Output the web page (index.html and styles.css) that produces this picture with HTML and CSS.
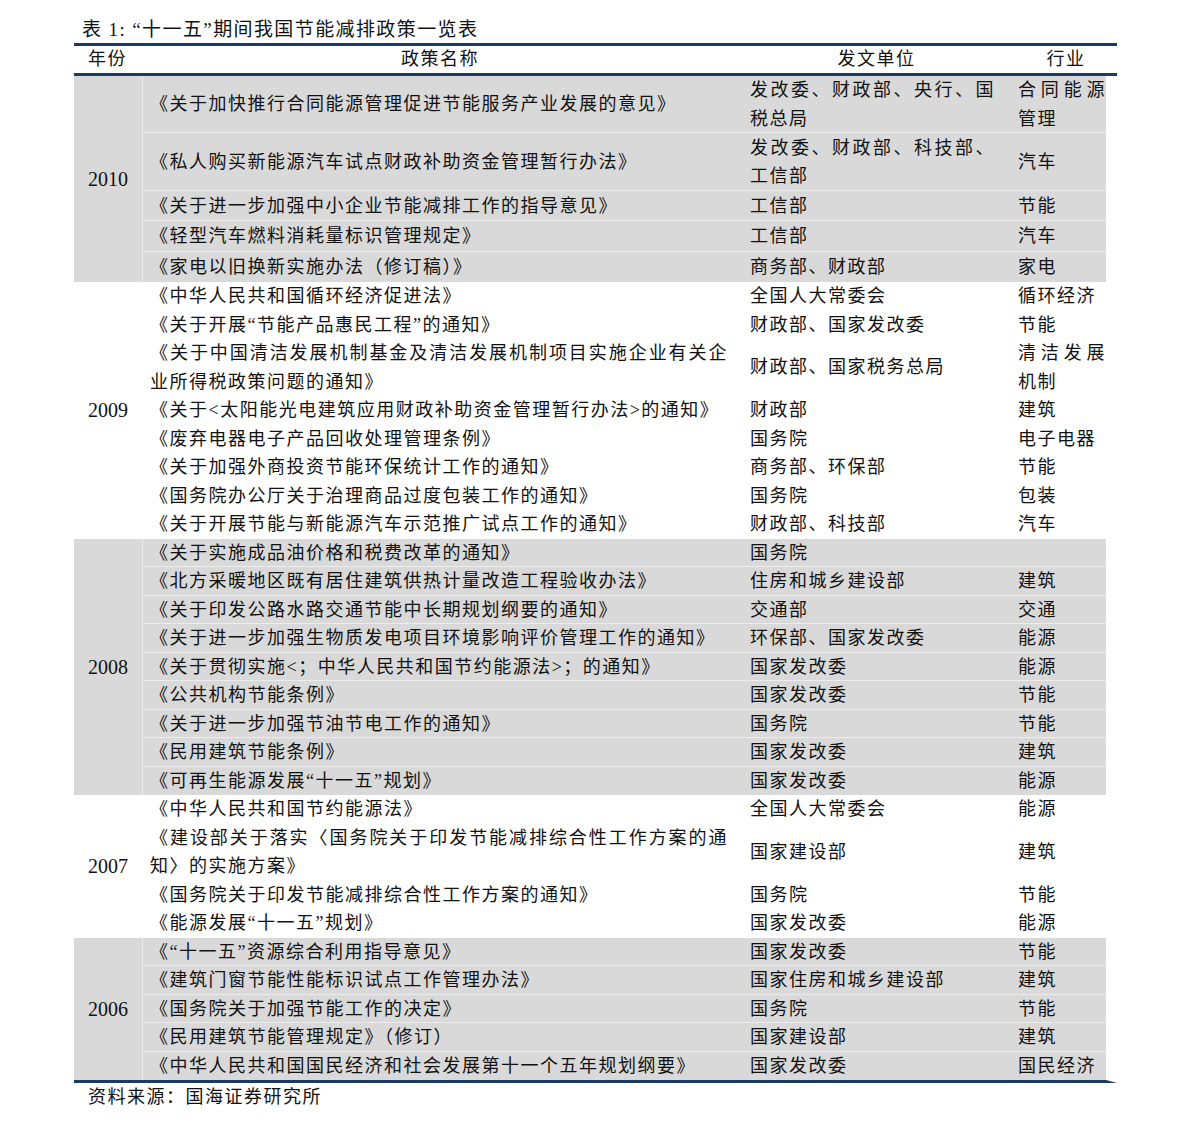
FILE: index.html
```html
<!DOCTYPE html>
<html lang="zh-CN">
<head>
<meta charset="utf-8">
<title>“十一五”期间我国节能减排政策一览表</title>
<link rel="stylesheet" href="styles.css">
</head>
<body>
<div class="page">
  <div class="title">表 1:&nbsp;“十一五”期间我国节能减排政策一览表</div>
  <table class="policy">
    <colgroup>
      <col class="c-year"><col class="c-name"><col class="c-org"><col class="c-ind">
    </colgroup>
    <thead>
      <tr><th class="year">年份</th><th class="name">政策名称</th><th class="org">发文单位</th><th class="ind">行业</th></tr>
    </thead>
    <tbody class="grey">
      <tr class="h57"><td class="year" rowspan="5">2010</td><td class="name">《关于加快推行合同能源管理促进节能服务产业发展的意见》</td><td class="org">发改委、财政部、央行、国税总局</td><td class="ind">合同能源管理</td></tr>
      <tr class="h58"><td class="name">《私人购买新能源汽车试点财政补助资金管理暂行办法》</td><td class="org">发改委、财政部、科技部、工信部</td><td class="ind">汽车</td></tr>
      <tr class="h30"><td class="name">《关于进一步加强中小企业节能减排工作的指导意见》</td><td class="org">工信部</td><td class="ind">节能</td></tr>
      <tr class="h31"><td class="name">《轻型汽车燃料消耗量标识管理规定》</td><td class="org">工信部</td><td class="ind">汽车</td></tr>
      <tr class="h30"><td class="name">《家电以旧换新实施办法（修订稿）》</td><td class="org">商务部、财政部</td><td class="ind">家电</td></tr>
    </tbody>
    <tbody class="white">
      <tr><td class="year" rowspan="8">2009</td><td class="name">《中华人民共和国循环经济促进法》</td><td class="org">全国人大常委会</td><td class="ind">循环经济</td></tr>
      <tr><td class="name">《关于开展“节能产品惠民工程”的通知》</td><td class="org">财政部、国家发改委</td><td class="ind">节能</td></tr>
      <tr><td class="name">《关于中国清洁发展机制基金及清洁发展机制项目实施企业有关企业所得税政策问题的通知》</td><td class="org">财政部、国家税务总局</td><td class="ind">清洁发展机制</td></tr>
      <tr><td class="name">《关于&lt;太阳能光电建筑应用财政补助资金管理暂行办法&gt;的通知》</td><td class="org">财政部</td><td class="ind">建筑</td></tr>
      <tr><td class="name">《废弃电器电子产品回收处理管理条例》</td><td class="org">国务院</td><td class="ind">电子电器</td></tr>
      <tr><td class="name">《关于加强外商投资节能环保统计工作的通知》</td><td class="org">商务部、环保部</td><td class="ind">节能</td></tr>
      <tr><td class="name">《国务院办公厅关于治理商品过度包装工作的通知》</td><td class="org">国务院</td><td class="ind">包装</td></tr>
      <tr><td class="name">《关于开展节能与新能源汽车示范推广试点工作的通知》</td><td class="org">财政部、科技部</td><td class="ind">汽车</td></tr>
    </tbody>
    <tbody class="grey">
      <tr><td class="year" rowspan="9">2008</td><td class="name">《关于实施成品油价格和税费改革的通知》</td><td class="org">国务院</td><td class="ind"></td></tr>
      <tr><td class="name">《北方采暖地区既有居住建筑供热计量改造工程验收办法》</td><td class="org">住房和城乡建设部</td><td class="ind">建筑</td></tr>
      <tr><td class="name">《关于印发公路水路交通节能中长期规划纲要的通知》</td><td class="org">交通部</td><td class="ind">交通</td></tr>
      <tr><td class="name">《关于进一步加强生物质发电项目环境影响评价管理工作的通知》</td><td class="org">环保部、国家发改委</td><td class="ind">能源</td></tr>
      <tr><td class="name">《关于贯彻实施&lt;；中华人民共和国节约能源法&gt;；的通知》</td><td class="org">国家发改委</td><td class="ind">能源</td></tr>
      <tr><td class="name">《公共机构节能条例》</td><td class="org">国家发改委</td><td class="ind">节能</td></tr>
      <tr><td class="name">《关于进一步加强节油节电工作的通知》</td><td class="org">国务院</td><td class="ind">节能</td></tr>
      <tr><td class="name">《民用建筑节能条例》</td><td class="org">国家发改委</td><td class="ind">建筑</td></tr>
      <tr><td class="name">《可再生能源发展“十一五”规划》</td><td class="org">国家发改委</td><td class="ind">能源</td></tr>
    </tbody>
    <tbody class="white">
      <tr><td class="year" rowspan="4">2007</td><td class="name">《中华人民共和国节约能源法》</td><td class="org">全国人大常委会</td><td class="ind">能源</td></tr>
      <tr><td class="name">《建设部关于落实〈国务院关于印发节能减排综合性工作方案的通知〉的实施方案》</td><td class="org">国家建设部</td><td class="ind">建筑</td></tr>
      <tr><td class="name">《国务院关于印发节能减排综合性工作方案的通知》</td><td class="org">国务院</td><td class="ind">节能</td></tr>
      <tr><td class="name">《能源发展“十一五”规划》</td><td class="org">国家发改委</td><td class="ind">能源</td></tr>
    </tbody>
    <tbody class="grey last">
      <tr><td class="year" rowspan="5">2006</td><td class="name">《“十一五”资源综合利用指导意见》</td><td class="org">国家发改委</td><td class="ind">节能</td></tr>
      <tr><td class="name">《建筑门窗节能性能标识试点工作管理办法》</td><td class="org">国家住房和城乡建设部</td><td class="ind">建筑</td></tr>
      <tr><td class="name">《国务院关于加强节能工作的决定》</td><td class="org">国务院</td><td class="ind">节能</td></tr>
      <tr><td class="name">《民用建筑节能管理规定》（修订）</td><td class="org">国家建设部</td><td class="ind">建筑</td></tr>
      <tr><td class="name">《中华人民共和国国民经济和社会发展第十一个五年规划纲要》</td><td class="org">国家发改委</td><td class="ind">国民经济</td></tr>
    </tbody>
  </table>
  <div class="source">资料来源：国海证券研究所</div>
</div>
</body>
</html>
```

FILE: styles.css
```css
html, body {
  margin: 0;
  padding: 0;
  background: #ffffff;
}

body {
  font-family: "Liberation Serif", "Noto Sans CJK SC", serif;
  color: #111;
  font-size: 18px;
}

.page {
  padding: 16px 0 0 74px;
}

.title {
  line-height: 27px;
  padding-left: 8px;
  letter-spacing: 1.4px;
  font-size: 19px;
}

.policy {
  border-collapse: separate;
  border-spacing: 0;
  width: 1043px;
  table-layout: fixed;
}

.c-year { width: 68px; }
.c-name { width: 596px; }
.c-org { width: 277px; }
.c-ind { width: 102px; }

.policy th {
  font-weight: normal;
  height: 27px;
  line-height: 27px;
  padding: 0;
  border-top: 3px solid #1d3a63;
  border-bottom: 3px solid #1d3a63;
  letter-spacing: 1.5px;
  text-align: center;
}

.policy th.year {
  text-align: left;
  padding-left: 14px;
}

.policy td {
  padding: 0;
  line-height: 28.5px;
  height: 28.5px;
  vertical-align: middle;
  letter-spacing: 1.5px;
  text-align: justify;
}

.policy td.year {
  font-size: 20px;
  letter-spacing: 0;
  padding-left: 14px;
  text-align: left;
}

.policy td.name {
  padding-left: 8px;
  padding-right: 10px;
}

.policy td.org {
  padding-left: 12px;
  padding-right: 20px;
}

.policy td.ind {
  padding-left: 3px;
  border-right: 11px solid #ffffff;
}

.grey td {
  background: #d9d9d9;
  box-shadow: inset 0 -1px 0 #ececec;
}

.grey td.year {
  box-shadow: none;
}

.grey td.name {
  box-shadow: inset 1px -1px 0 #ececec;
}

.grey tr:last-child td {
  box-shadow: none;
}

.grey tr:last-child td.name {
  box-shadow: inset 1px 0 0 #ececec;
}

.white td {
  background: #ffffff;
}

.h57 td { height: 57px; }
.h58 td { height: 58px; }
.h30 td { height: 30px; }
.h31 td { height: 31px; }

.last tr:last-child td {
  border-bottom: 3px solid #1d3a63;
}

.last tr:first-child td.year {
  border-bottom: 3px solid #1d3a63;
}

.source {
  line-height: 28px;
  padding-left: 14px;
  letter-spacing: 1.5px;
}
```
